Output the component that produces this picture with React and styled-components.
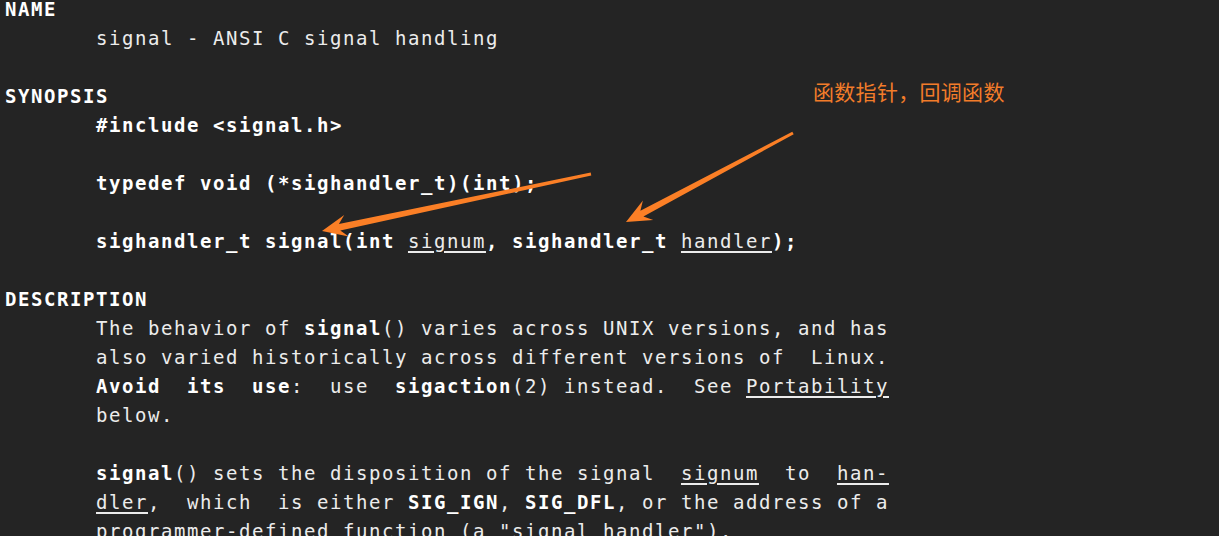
import React from "react";
import styled, { createGlobalStyle } from "styled-components";

const GlobalStyle = createGlobalStyle`
  html, body { margin: 0; padding: 0; background: #242424; }
  #root { min-height: 100vh; }
`;

const Screen = styled.div`
  position: relative;
  width: 100%;
  height: 536px;
  overflow: hidden;
  background: #242424;
`;

const ManPage = styled.div`
  margin-top: -5px;
  padding: 0 5px;
  font-family: "DejaVu Sans Mono", monospace;
  font-size: 19px;
  letter-spacing: 1.56px;
  line-height: 29px;
  color: #ececec;
`;

const Line = styled.div`
  white-space: pre;
  height: 29px;
  font-weight: ${(p) => (p.$bold ? 700 : 400)};
  color: ${(p) => (p.$bold ? "#ffffff" : "inherit")};
`;

const B = styled.b`
  font-weight: 700;
  color: #ffffff;
`;

const U = styled.span`
  font-weight: 400;
  color: #ececec;
  text-decoration: underline;
  text-decoration-thickness: 2px;
  text-underline-offset: 3px;
`;

const Annotation = styled.div`
  position: absolute;
  left: 813px;
  top: 81px;
  font-family: "Noto Sans CJK SC", sans-serif;
  font-size: 21px;
  letter-spacing: 0.3px;
  line-height: 21px;
  font-weight: 400;
  color: #f27c2a;
  white-space: nowrap;
`;

const Overlay = styled.svg`
  position: absolute;
  left: 0;
  top: 0;
  pointer-events: none;
`;

function arrowPoints(tx, ty, px, py, L = 25, W = 11, w0 = 1.4, w1 = 3.2) {
  const dx = px - tx;
  const dy = py - ty;
  const len = Math.hypot(dx, dy);
  const ux = dx / len;
  const uy = dy / len;
  const nx = -uy;
  const ny = ux;
  const at = (d, n) => [px - ux * d + nx * n, py - uy * d + ny * n];
  const pts = [
    [tx + nx * w0, ty + ny * w0],
    at(L - 7, w1),
    at(L, W),
    [px, py],
    at(L, -W),
    at(L - 7, -w1),
    [tx - nx * w0, ty - ny * w0],
  ];
  return pts.map((p) => p.map((v) => v.toFixed(1)).join(",")).join(" ");
}

const Arrow = ({ from, to }) => (
  <polygon points={arrowPoints(from[0], from[1], to[0], to[1])} fill="#fb7f26" />
);

export default function App() {
  return (
    <>
      <GlobalStyle />
      <Screen>
        <ManPage>
          <Line $bold>NAME</Line>
          <Line>{"       signal - ANSI C signal handling"}</Line>
          <Line />
          <Line $bold>SYNOPSIS</Line>
          <Line $bold>{"       #include <signal.h>"}</Line>
          <Line />
          <Line $bold>{"       typedef void (*sighandler_t)(int);"}</Line>
          <Line />
          <Line $bold>
            {"       sighandler_t signal(int "}
            <U>signum</U>
            {", sighandler_t "}
            <U>handler</U>
            {");"}
          </Line>
          <Line />
          <Line $bold>DESCRIPTION</Line>
          <Line>
            {"       The behavior of "}
            <B>signal</B>
            {"() varies across UNIX versions, and has"}
          </Line>
          <Line>{"       also varied historically across different versions of  Linux."}</Line>
          <Line>
            {"       "}
            <B>{"Avoid  its  use"}</B>
            {":  use  "}
            <B>sigaction</B>
            {"(2) instead.  See "}
            <U>Portability</U>
          </Line>
          <Line>{"       below."}</Line>
          <Line />
          <Line>
            {"       "}
            <B>signal</B>
            {"() sets the disposition of the signal  "}
            <U>signum</U>
            {"  to  "}
            <U>han-</U>
          </Line>
          <Line>
            {"       "}
            <U>dler</U>
            {",  which  is either "}
            <B>SIG_IGN</B>
            {", "}
            <B>SIG_DFL</B>
            {", or the address of a"}
          </Line>
          <Line>{'       programmer-defined function (a "signal handler").'}</Line>
        </ManPage>
        <Annotation>函数指针，回调函数</Annotation>
        <Overlay width="1219" height="536" viewBox="0 0 1219 536">
          <Arrow from={[591, 174]} to={[322, 231]} />
          <Arrow from={[793, 133]} to={[626, 222]} />
        </Overlay>
      </Screen>
    </>
  );
}
